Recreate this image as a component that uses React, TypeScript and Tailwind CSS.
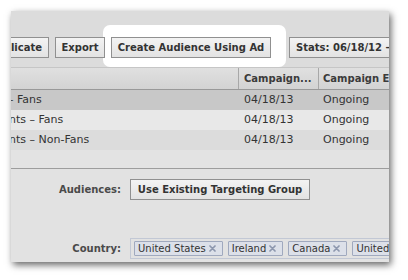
import type { ReactNode } from "react";

const ROWS = [
  { name: "– Fans", offset: "ml-[-3px]", date: "04/18/13", end: "Ongoing", bg: "bg-[#c8c8c8]" },
  { name: "nts – Fans", offset: "ml-[-2px]", date: "04/18/13", end: "Ongoing", bg: "bg-[#e8e8e8]" },
  { name: "nts – Non-Fans", offset: "ml-[-2px]", date: "04/18/13", end: "Ongoing", bg: "bg-[#dcdcdc]" },
];

const COUNTRIES = ["United States", "Ireland", "Canada", "United Kingdom"];

export default function App() {
  return (
    <div className="w-[408px] h-[280px] overflow-hidden bg-white pl-[11px] pt-[11px] font-['DejaVu_Sans',sans-serif]">
      <div className="relative flex h-[251px] w-[378px] flex-col overflow-hidden bg-[#e2e2e2] shadow-[2px_3px_7px_rgba(0,0,0,0.6)]">
        {/* toolbar */}
        <div className="relative h-[56px] shrink-0 bg-[#dcdcdc]">
          <div className="absolute left-[92px] top-[14px] h-[42px] w-[183px] rounded-[7px] bg-white" />
          <div className="relative flex items-start gap-[6px] pt-[26px]">
            <ToolButton className="ml-[-32px] w-[70px] justify-end">Duplicate</ToolButton>
            <ToolButton className="w-[50px] justify-center">Export</ToolButton>
            <ToolButton className="w-[160px] justify-center">Create Audience Using Ad</ToolButton>
            <ToolButton className="ml-[12px] w-[190px]">Stats: 06/18/12 – 04/18/13</ToolButton>
          </div>
        </div>

        {/* table header */}
        <div className="flex h-[23px] shrink-0 border-t border-b border-t-[#c6c6c6] border-b-[#999999] bg-gradient-to-b from-[#e0e0e0] to-[#d3d3d3] text-[10px] font-bold leading-[21px] text-[#3b3b3b]">
          <div className="w-[228px] shrink-0 border-r border-[#a8a8a8]" />
          <div className="w-[80px] shrink-0 border-r border-[#a8a8a8] pl-[5px] whitespace-nowrap">Campaign...</div>
          <div className="pl-[4px] whitespace-nowrap">Campaign End</div>
        </div>

        {/* rows */}
        {ROWS.map((row) => (
          <div key={row.name} className={`flex h-[20px] shrink-0 text-[11px] leading-[20px] text-[#333] ${row.bg}`}>
            <div className="w-[228px] shrink-0 overflow-hidden whitespace-nowrap">
              <span className={`inline-block ${row.offset}`}>{row.name}</span>
            </div>
            <div className="w-[80px] shrink-0 pl-[5px]">{row.date}</div>
            <div className="pl-[4px]">{row.end}</div>
          </div>
        ))}

        <div className="h-[18px] shrink-0 bg-[#e3e3e3]" />
        <div className="h-px shrink-0 bg-[#9d9d9d]" />

        {/* form */}
        <div className="mt-[10px] flex h-[21px] shrink-0 items-center">
          <div className="w-[110px] shrink-0 text-right text-[10px] font-bold text-[#4a4a4a]">Audiences:</div>
          <ToolButton className="ml-[9px] w-[180px] justify-center">Use Existing Targeting Group</ToolButton>
        </div>

        <div className="mt-[38px] flex h-[21px] shrink-0 items-center">
          <div className="w-[110px] shrink-0 text-right text-[10px] font-bold text-[#4a4a4a]">Country:</div>
          <div className="ml-[9px] flex h-[21px] items-center gap-[5px] border border-[#c2c8d5] pl-[3px] whitespace-nowrap">
            {COUNTRIES.map((c) => (
              <Tag key={c}>{c}</Tag>
            ))}
          </div>
        </div>
      </div>
    </div>
  );
}

function ToolButton({ children, className = "" }: { children: ReactNode; className?: string }) {
  return (
    <div
      className={`flex h-[21px] shrink-0 items-center overflow-hidden whitespace-nowrap border border-[#909090] bg-gradient-to-b from-[#f3f3f3] to-[#e3e3e3] px-[6px] text-[10px] font-bold text-[#333] ${className}`}
    >
      {children}
    </div>
  );
}

function Tag({ children }: { children: ReactNode }) {
  return (
    <div className="flex h-[15px] shrink-0 items-center gap-[3px] rounded-[1px] border border-[#a0a9be] bg-[#dce0e9] pl-[3px] pr-[6px] text-[10px] leading-[13px] text-[#333]">
      <span>{children}</span>
      <svg width="7" height="7" viewBox="0 0 7 7" className="shrink-0">
        <path d="M1 1L6 6M6 1L1 6" stroke="#8d97ae" strokeWidth="1.7" strokeLinecap="round" />
      </svg>
    </div>
  );
}
